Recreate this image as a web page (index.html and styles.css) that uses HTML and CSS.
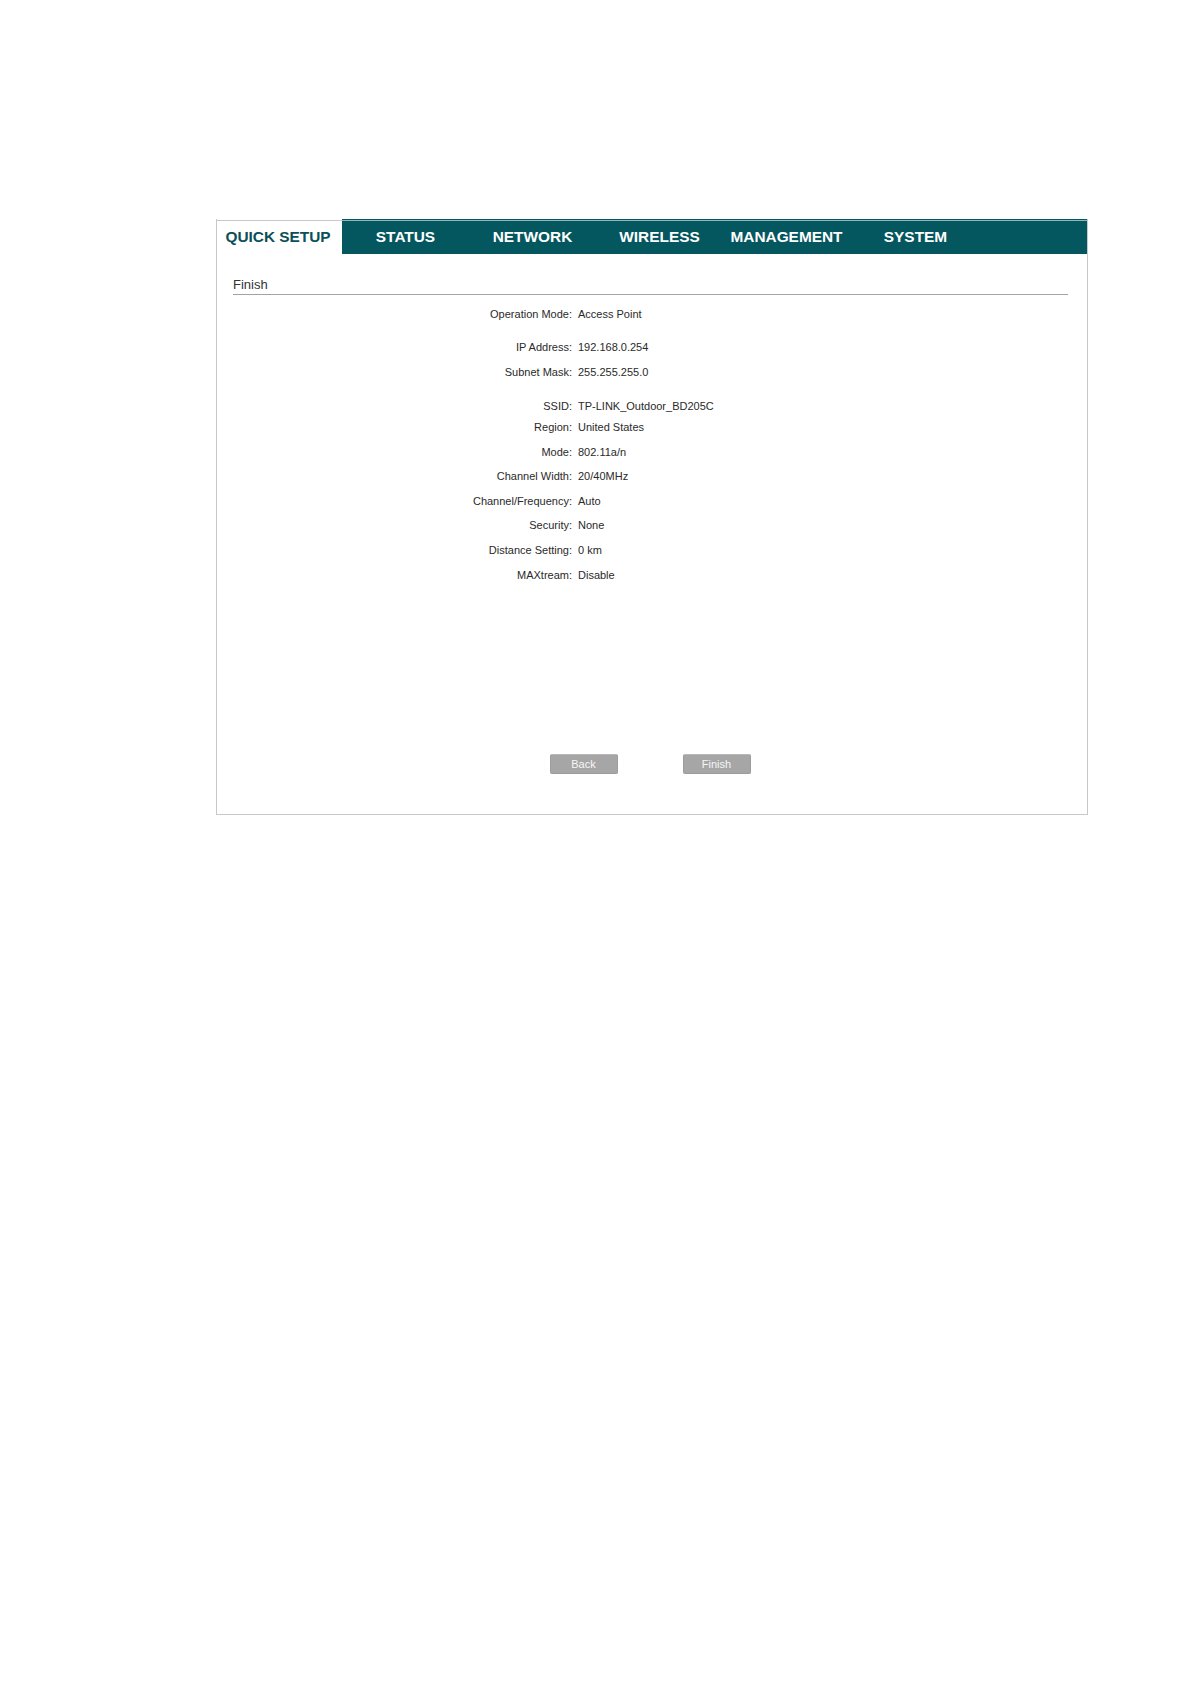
FILE: index.html
```html
<!DOCTYPE html>
<html lang="en">
<head>
<meta charset="utf-8">
<title>Quick Setup - Finish</title>
<link rel="stylesheet" href="styles.css">
</head>
<body>
<div class="page">
  <div class="panel">
    <div class="nav">
      <div class="tab active">QUICK SETUP</div>
      <div class="bar">
        <div class="tab">STATUS</div>
        <div class="tab">NETWORK</div>
        <div class="tab">WIRELESS</div>
        <div class="tab">MANAGEMENT</div>
        <div class="tab">SYSTEM</div>
      </div>
    </div>
    <div class="title">Finish</div>
    <div class="rows">
      <div class="row"><span class="label">Operation Mode:</span><span class="value">Access Point</span></div>
      <div class="row gap1"><span class="label">IP Address:</span><span class="value">192.168.0.254</span></div>
      <div class="row"><span class="label">Subnet Mask:</span><span class="value">255.255.255.0</span></div>
      <div class="row short gap2"><span class="label">SSID:</span><span class="value">TP-LINK_Outdoor_BD205C</span></div>
      <div class="row"><span class="label">Region:</span><span class="value">United States</span></div>
      <div class="row"><span class="label">Mode:</span><span class="value">802.11a/n</span></div>
      <div class="row"><span class="label">Channel Width:</span><span class="value">20/40MHz</span></div>
      <div class="row"><span class="label">Channel/Frequency:</span><span class="value">Auto</span></div>
      <div class="row"><span class="label">Security:</span><span class="value">None</span></div>
      <div class="row"><span class="label">Distance Setting:</span><span class="value">0 km</span></div>
      <div class="row"><span class="label">MAXtream:</span><span class="value">Disable</span></div>
    </div>
    <div class="buttons">
      <button class="btn" type="button">Back</button>
      <button class="btn" type="button">Finish</button>
    </div>
  </div>
</div>
</body>
</html>
```

FILE: styles.css
```css
html, body {
  margin: 0;
  padding: 0;
  background: #ffffff;
}

body {
  font-family: "Liberation Sans", Arial, sans-serif;
}

.page {
  padding: 219px 0 0 216px;
}

.panel {
  width: 872px;
  box-sizing: border-box;
  border-left: 1px solid #c9c9c9;
  border-right: 1px solid #c9c9c9;
  border-bottom: 1px solid #c9c9c9;
  padding-bottom: 40px;
}

.nav {
  display: flex;
  height: 35px;
}

.tab {
  width: 127px;
  box-sizing: border-box;
  display: flex;
  align-items: center;
  justify-content: center;
  font-size: 15.4px;
  font-weight: bold;
  color: #ffffff;
  white-space: nowrap;
}

.tab.active {
  width: 125px;
  margin-top: 1px;
  padding: 0 3px 2px 0;
  border-top: 1px solid #c9c9c9;
  background: #ffffff;
  color: #0b4f58;
}

.bar {
  flex: 1;
  display: flex;
  background: #04565f;
  border-top: 1px solid #04565f;
  box-shadow: inset 0 1px 0 #8fb9bd;
  box-sizing: border-box;
}

.bar .tab {
  margin-top: -1px;
}

.bar .tab:nth-child(5) {
  padding-left: 4px;
}

.bar .tab:nth-child(5) + .tab {
  padding-left: 4px;
}

.title {
  margin: 0 19px 0 16px;
  padding: 23px 0 2px 0;
  border-bottom: 1px solid #a3a3a3;
  font-size: 13px;
  line-height: 15px;
  color: #333333;
}

.rows {
  margin-top: 6.7px;
  font-size: 11px;
  color: #2a2a2a;
}

.row {
  display: flex;
  height: 24.6px;
  line-height: 24.6px;
  white-space: nowrap;
}

.row.short {
  height: 16.8px;
  line-height: 16.8px;
}

.row.gap1 {
  margin-top: 9.1px;
}

.row.gap2 {
  margin-top: 13.6px;
}

.label {
  width: 355px;
  text-align: right;
}

.value {
  margin-left: 6px;
}

.buttons {
  display: flex;
  justify-content: center;
  gap: 65px;
  margin-top: 166.4px;
  padding-right: 4px;
}

.btn {
  width: 68px;
  height: 20px;
  padding: 0;
  margin: 0;
  background: #a6a6a6;
  border: 1px solid #9c9c9c;
  border-top-color: #b8b8b8;
  border-radius: 2px;
  font-family: "Liberation Sans", Arial, sans-serif;
  font-size: 11px;
  color: #f6f6f6;
  line-height: 18px;
}
```
